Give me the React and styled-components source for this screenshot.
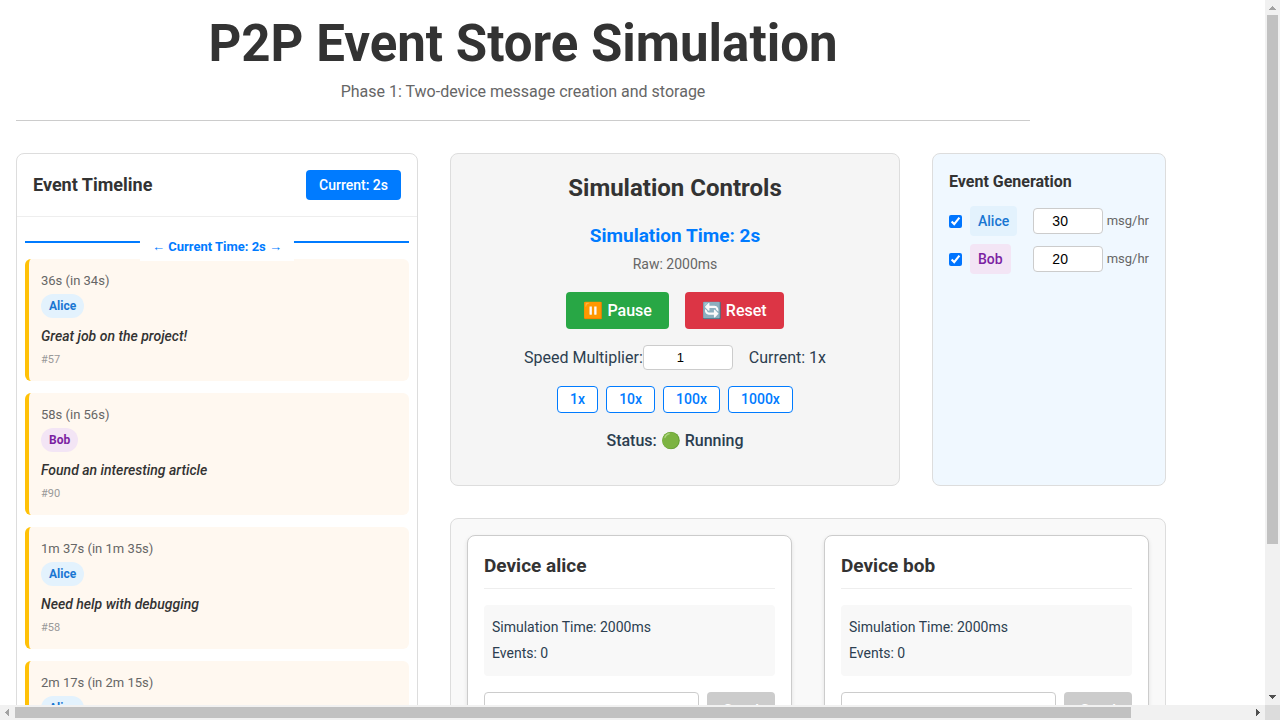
import React, { useEffect, useRef, useState } from "react";
import styled, { createGlobalStyle } from "styled-components";

const GlobalStyle = createGlobalStyle`
  *, *::before, *::after { box-sizing: border-box; }
  html { background: #fff; }
  body {
    margin: 0;
    font-family: Roboto, "Liberation Sans", sans-serif;
    font-size: 16px;
    line-height: 26px;
    color: #2c3e50;
  }
  h1, h2, h3, h4, p { margin: 0; }
  button { font-family: inherit; cursor: pointer; }
`;

const Shell = styled.div`
  display: grid;
  grid-template-columns: minmax(0, 1fr) 15px;
  grid-template-rows: minmax(0, 1fr) 15px;
  height: 100vh;
`;

const ScrollArea = styled.div`
  overflow: auto;
  scrollbar-width: none;
`;

const ScrollBar = styled.div`
  display: flex;
  flex-direction: ${(p) => (p.$vertical ? "column" : "row")};
  background: #f1f1f1;
`;

const ScrollArrow = styled.button`
  flex: none;
  display: block;
  width: 15px;
  height: 15px;
  padding: 0;
  border: 0;
  background: transparent;

  svg { display: block; }
`;

const ScrollTrack = styled.div`
  flex: 1;
  display: flex;
  flex-direction: ${(p) => (p.$vertical ? "column" : "row")};
  min-width: 0;
  min-height: 0;
  padding: ${(p) => (p.$vertical ? "0 2px" : "2px 0")};
`;

const ScrollThumb = styled.div`
  flex: none;
  background: #c1c1c1;
`;

const ScrollCorner = styled.div`
  background: #dcdcdc;
`;

const Page = styled.div`
  display: flex;
  flex-direction: column;
  gap: 32px;
  min-width: 1400px;
  min-height: 900px;
  padding: 16px;
`;

const Header = styled.header`
  max-width: 1014px;
  padding-bottom: 16px;
  border-bottom: 1px solid #ccc;
  text-align: center;
`;

const PageTitle = styled.h1`
  margin-bottom: 8px;
  font-size: 51px;
  line-height: 56px;
  font-weight: 700;
  color: #333;
`;

const Subtitle = styled.p`
  line-height: 24px;
  color: #666;
`;

const Dashboard = styled.main`
  flex: 1;
  display: grid;
  grid-template-columns: minmax(0, 402fr) minmax(0, 450fr) minmax(0, 234fr);
  grid-template-rows: auto 1fr;
  gap: 32px;
  max-width: 1150px;
`;

const Panel = styled.section`
  border: 1px solid #ddd;
  border-radius: 8px;
  background: ${(p) => p.$fill || "#fff"};
`;

const TimelinePanel = styled(Panel)`
  grid-row: 1 / span 2;
`;

const TimelineHeader = styled.div`
  display: flex;
  align-items: center;
  justify-content: space-between;
  padding: 16px;
  border-bottom: 1px solid #eee;
`;

const TimelineTitle = styled.h3`
  font-size: 18px;
  font-weight: 700;
  color: #333;
`;

const CurrentButton = styled.button`
  height: 30px;
  padding: 0 13px 1px;
  border: 0;
  border-radius: 4px;
  background: #007bff;
  color: #fff;
  font-size: 14px;
  font-weight: 500;
`;

const TimelineBody = styled.div`
  padding: 24px 8px 8px;
`;

const NowLine = styled.div`
  position: relative;
  height: 2px;
  margin-bottom: 16px;
  background: #007bff;
`;

const NowLabel = styled.span`
  position: absolute;
  top: -10px;
  left: 50%;
  transform: translateX(-50%);
  padding: 5px 12px 3px;
  background: #fff;
  color: #007bff;
  font-size: 13px;
  line-height: 22px;
  font-weight: 700;
  white-space: nowrap;
`;

const EventList = styled.ul`
  display: grid;
  gap: 12px;
  margin: 0;
  padding: 0;
  list-style: none;
`;

const EventCard = styled.li`
  display: flex;
  flex-direction: column;
  align-items: flex-start;
  padding: 12px;
  border-left: 4px solid #ffc107;
  border-radius: 6px;
  background: #fff8f0;
`;

const EventTime = styled.span`
  margin-bottom: 4px;
  font-size: 13px;
  line-height: 19px;
  color: #666;
`;

const deviceColors = {
  alice: "background: #e3f2fd; color: #1976d2;",
  bob: "background: #f3e5f5; color: #7b1fa2;",
};

const DevicePill = styled.span`
  margin-bottom: 8px;
  padding: 0 8px;
  border-radius: 12px;
  font-size: 12px;
  line-height: 24px;
  font-weight: 700;
  ${(p) => deviceColors[p.$device]}
`;

const EventMessage = styled.p`
  margin-bottom: 4px;
  font-size: 14px;
  line-height: 20px;
  font-style: italic;
  font-weight: 500;
  color: #333;
`;

const EventId = styled.span`
  font-size: 11px;
  line-height: 19px;
  color: #999;
`;

const ControlsPanel = styled(Panel)`
  display: flex;
  flex-direction: column;
  align-items: center;
  padding: 16px 16px 32px;
`;

const ControlsTitle = styled.h2`
  margin-bottom: 16px;
  font-size: 24px;
  line-height: 36px;
  font-weight: 700;
  color: #333;
`;

const SimTime = styled.p`
  font-size: 19px;
  line-height: 28px;
  font-weight: 700;
  color: #007bff;
`;

const RawTime = styled.p`
  margin-bottom: 14px;
  font-size: 14px;
  line-height: 28px;
  color: #666;
`;

const ControlRow = styled.div`
  display: flex;
  align-items: center;
  gap: ${(p) => p.$gap}px;
  margin-bottom: 16px;
`;

const ActionButton = styled.button`
  height: 37px;
  padding: 0 17px;
  border: 0;
  border-radius: 4px;
  background: ${(p) => (p.$danger ? "#dc3545" : "#28a745")};
  color: #fff;
  font-size: 16px;
  font-weight: 500;
`;

const NumberInput = styled.input`
  width: ${(p) => p.$width}px;
  height: ${(p) => p.$height}px;
  padding: 4px 8px;
  border: 1px solid #ccc;
  border-radius: 4px;
  background: #fff;
  color: #000;
  font-family: "Liberation Sans", Arial, sans-serif;
  font-size: ${(p) => p.$size}px;
  text-align: center;
`;

const SpeedLabel = styled.label`
  display: flex;
  align-items: center;
  line-height: 25px;
`;

const CurrentSpeed = styled.span`
  line-height: 25px;
`;

const SpeedButton = styled.button`
  height: 27px;
  padding: 0 12px 1px;
  border: 1px solid #007bff;
  border-radius: 4px;
  background: #fff;
  color: #007bff;
  font-size: 14px;
  font-weight: 500;
`;

const Status = styled.p`
  line-height: 24px;
  font-weight: 500;
`;

const GenerationPanel = styled(Panel)`
  padding: 16px;
`;

const GenerationTitle = styled.h4`
  margin-bottom: 12px;
  font-size: 16px;
  line-height: 24px;
  font-weight: 700;
  color: #333;
`;

const RateList = styled.div`
  display: grid;
  gap: 8px;
`;

const RateRow = styled.div`
  display: flex;
  align-items: center;
  gap: 4px;
`;

const DeviceToggle = styled.label`
  flex: 1;
  display: flex;
  align-items: center;
  gap: 8px;
`;

const Checkbox = styled.input`
  width: 13px;
  height: 13px;
  margin: 0;
`;

const DeviceTag = styled.span`
  padding: 0 8px;
  border-radius: 4px;
  font-size: 14px;
  line-height: 30px;
  font-weight: 500;
  ${(p) => deviceColors[p.$device]}
`;

const Unit = styled.span`
  font-size: 13px;
  color: #666;
`;

const DevicesPanel = styled(Panel)`
  grid-column: 2 / span 2;
  display: grid;
  grid-template-columns: repeat(2, minmax(0, 1fr));
  gap: 32px;
  padding: 16px;
`;

const DeviceCard = styled.article`
  padding: 16px;
  border: 1px solid #ccc;
  border-radius: 8px;
  background: #fff;
  box-shadow: 0 2px 4px rgba(0, 0, 0, 0.1);
`;

const DeviceTitle = styled.h3`
  margin-bottom: 16px;
  padding-bottom: 8px;
  border-bottom: 1px solid #eee;
  font-size: 19px;
  line-height: 28px;
  font-weight: 700;
  color: #333;
`;

const DeviceInfo = styled.div`
  margin-bottom: 16px;
  padding: 9px 8px 10px;
  border-radius: 4px;
  background: #f8f8f8;
  font-size: 14px;
`;

const Composer = styled.form`
  display: flex;
  gap: 8px;
`;

const MessageInput = styled.input`
  flex: 1;
  min-width: 0;
  height: 37px;
  padding: 8px;
  border: 1px solid #ccc;
  border-radius: 4px;
  background: #fff;
  font-size: 14px;
`;

const SendButton = styled.button`
  width: 68px;
  height: 37px;
  border: 0;
  border-radius: 4px;
  background: #ccc;
  color: #fff;
  font-size: 16px;
  font-weight: 500;
`;

const events = [
  { id: 57, time: "36s (in 34s)", device: "alice", name: "Alice", text: "Great job on the project!" },
  { id: 90, time: "58s (in 56s)", device: "bob", name: "Bob", text: "Found an interesting article" },
  { id: 58, time: "1m 37s (in 1m 35s)", device: "alice", name: "Alice", text: "Need help with debugging" },
  { id: 59, time: "2m 17s (in 2m 15s)", device: "alice", name: "Alice", text: "Great job on the project!" },
];

const generators = [
  { device: "alice", name: "Alice", rate: 30 },
  { device: "bob", name: "Bob", rate: 20 },
];

const arrows = {
  up: { label: "Scroll up", d: "M7 6h1v1h1v1h1v1h1v1H4V9h1V8h1V7h1z" },
  down: { label: "Scroll down", d: "M4 5h7v1h-1v1H9v1H8v1H7V8H6V7H5V6H4z" },
  left: { label: "Scroll left", d: "M9 4v7H8v-1H7V9H6V8H5V7h1V6h1V5h1V4z" },
  right: { label: "Scroll right", d: "M6 4h1v1h1v1h1v1h1v1H9v1H8v1H7v1H6z" },
};

function Arrow({ direction, active, onClick }) {
  return (
    <ScrollArrow type="button" aria-label={arrows[direction].label} onClick={onClick}>
      <svg width="15" height="15" viewBox="0 0 15 15" shapeRendering="crispEdges">
        <path d={arrows[direction].d} fill={active ? "#505050" : "#a3a3a3"} />
      </svg>
    </ScrollArrow>
  );
}

function Bar({ vertical, view, total, offset, onStep }) {
  const size = `${(view / total) * 100}%`;
  const start = `${(offset / total) * 100}%`;
  const thumb = vertical
    ? { height: size, marginTop: 0, transform: `translateY(${(offset / view) * 100}%)` }
    : { width: size, marginLeft: start };
  return (
    <ScrollBar $vertical={vertical}>
      <Arrow
        direction={vertical ? "up" : "left"}
        active={offset > 0}
        onClick={() => onStep(-40)}
      />
      <ScrollTrack $vertical={vertical}>
        <ScrollThumb style={thumb} />
      </ScrollTrack>
      <Arrow
        direction={vertical ? "down" : "right"}
        active={offset + view < total}
        onClick={() => onStep(40)}
      />
    </ScrollBar>
  );
}

function ScrollFrame({ children }) {
  const area = useRef(null);
  const [m, setM] = useState({ w: 1, h: 1, tw: 1, th: 1, x: 0, y: 0 });

  const measure = () => {
    const el = area.current;
    setM({
      w: el.clientWidth,
      h: el.clientHeight,
      tw: el.scrollWidth,
      th: el.scrollHeight,
      x: el.scrollLeft,
      y: el.scrollTop,
    });
  };

  useEffect(() => {
    measure();
    window.addEventListener("resize", measure);
    return () => window.removeEventListener("resize", measure);
  }, []);

  return (
    <Shell>
      <ScrollArea ref={area} onScroll={measure}>{children}</ScrollArea>
      <Bar
        vertical
        view={m.h}
        total={m.th}
        offset={m.y}
        onStep={(d) => area.current.scrollBy(0, d)}
      />
      <Bar
        view={m.w}
        total={m.tw}
        offset={m.x}
        onStep={(d) => area.current.scrollBy(d, 0)}
      />
      <ScrollCorner />
    </Shell>
  );
}

function Timeline() {
  return (
    <TimelinePanel>
      <TimelineHeader>
        <TimelineTitle>Event Timeline</TimelineTitle>
        <CurrentButton type="button">Current: 2s</CurrentButton>
      </TimelineHeader>
      <TimelineBody>
        <NowLine>
          <NowLabel>← Current Time: 2s →</NowLabel>
        </NowLine>
        <EventList>
          {events.map((e) => (
            <EventCard key={e.id}>
              <EventTime>{e.time}</EventTime>
              <DevicePill $device={e.device}>{e.name}</DevicePill>
              <EventMessage>{e.text}</EventMessage>
              <EventId>#{e.id}</EventId>
            </EventCard>
          ))}
        </EventList>
      </TimelineBody>
    </TimelinePanel>
  );
}

function Controls() {
  const [speed, setSpeed] = useState(1);
  return (
    <ControlsPanel $fill="#f5f5f5">
      <ControlsTitle>Simulation Controls</ControlsTitle>
      <SimTime>Simulation Time: 2s</SimTime>
      <RawTime>Raw: 2000ms</RawTime>
      <ControlRow $gap={16}>
        <ActionButton type="button">⏸️ Pause</ActionButton>
        <ActionButton type="button" $danger>🔄 Reset</ActionButton>
      </ControlRow>
      <ControlRow $gap={16}>
        <SpeedLabel>
          Speed Multiplier:
          <NumberInput
            type="number"
            $width={90}
            $height={25}
            $size={13}
            value={speed}
            onChange={(e) => setSpeed(Number(e.target.value))}
          />
        </SpeedLabel>
        <CurrentSpeed>Current: {speed}x</CurrentSpeed>
      </ControlRow>
      <ControlRow $gap={8}>
        {[1, 10, 100, 1000].map((n) => (
          <SpeedButton key={n} type="button" onClick={() => setSpeed(n)}>
            {n}x
          </SpeedButton>
        ))}
      </ControlRow>
      <Status>Status: 🟢 Running</Status>
    </ControlsPanel>
  );
}

function Generation() {
  return (
    <GenerationPanel $fill="#f0f8ff">
      <GenerationTitle>Event Generation</GenerationTitle>
      <RateList>
        {generators.map((g) => (
          <RateRow key={g.device}>
            <DeviceToggle>
              <Checkbox type="checkbox" defaultChecked />
              <DeviceTag $device={g.device}>{g.name}</DeviceTag>
            </DeviceToggle>
            <NumberInput
              type="number"
              aria-label={`${g.name} messages per hour`}
              $width={70}
              $height={26}
              $size={14}
              defaultValue={g.rate}
            />
            <Unit>msg/hr</Unit>
          </RateRow>
        ))}
      </RateList>
    </GenerationPanel>
  );
}

function Device({ id }) {
  return (
    <DeviceCard>
      <DeviceTitle>Device {id}</DeviceTitle>
      <DeviceInfo>
        <p>Simulation Time: 2000ms</p>
        <p>Events: 0</p>
      </DeviceInfo>
      <Composer onSubmit={(e) => e.preventDefault()}>
        <MessageInput type="text" aria-label={`Message from ${id}`} />
        <SendButton type="submit" disabled>Send</SendButton>
      </Composer>
    </DeviceCard>
  );
}

export default function App() {
  return (
    <>
      <GlobalStyle />
      <ScrollFrame>
        <Page>
          <Header>
            <PageTitle>P2P Event Store Simulation</PageTitle>
            <Subtitle>Phase 1: Two-device message creation and storage</Subtitle>
          </Header>
          <Dashboard>
            <Timeline />
            <Controls />
            <Generation />
            <DevicesPanel $fill="#f9f9f9">
              <Device id="alice" />
              <Device id="bob" />
            </DevicesPanel>
          </Dashboard>
        </Page>
      </ScrollFrame>
    </>
  );
}
